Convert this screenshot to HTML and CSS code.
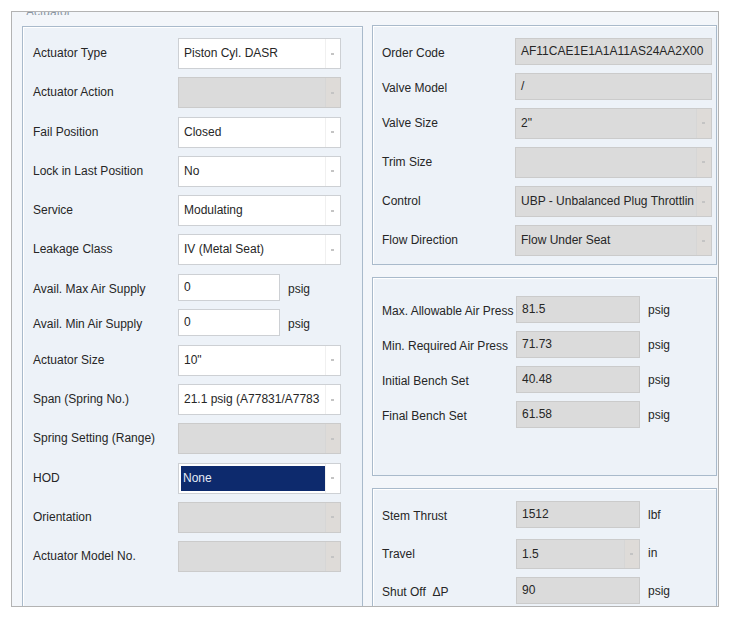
FILE: index.html
```html
<!DOCTYPE html>
<html lang="en">
<head>
    <meta charset="UTF-8">
    <title>Actuator</title>
    <link rel="stylesheet" href="styles.css">
</head>
<body>
    <div class="frame">
        <div class="legend">Actuator</div>
        <div class="columns">
            <div class="group left">
                <div class="row sel"><span class="lbl">Actuator Type</span><div class="fld drop">Piston Cyl. DASR</div></div>
                <div class="row sel"><span class="lbl">Actuator Action</span><div class="fld drop off"></div></div>
                <div class="row sel"><span class="lbl">Fail Position</span><div class="fld drop">Closed</div></div>
                <div class="row sel"><span class="lbl">Lock in Last Position</span><div class="fld drop">No</div></div>
                <div class="row sel"><span class="lbl">Service</span><div class="fld drop">Modulating</div></div>
                <div class="row sel"><span class="lbl">Leakage Class</span><div class="fld drop">IV (Metal Seat)</div></div>
                <div class="row txt"><span class="lbl">Avail. Max Air Supply</span><div class="fld short">0</div><span class="unit">psig</span></div>
                <div class="row txt"><span class="lbl">Avail. Min Air Supply</span><div class="fld short">0</div><span class="unit">psig</span></div>
                <div class="row sel"><span class="lbl">Actuator Size</span><div class="fld drop">10"</div></div>
                <div class="row sel"><span class="lbl">Span (Spring No.)</span><div class="fld drop">21.1 psig (A77831/A7783</div></div>
                <div class="row sel"><span class="lbl">Spring Setting (Range)</span><div class="fld drop off"></div></div>
                <div class="row sel"><span class="lbl">HOD</span><div class="fld drop"><span class="pick">None</span></div></div>
                <div class="row sel"><span class="lbl">Orientation</span><div class="fld drop off"></div></div>
                <div class="row sel"><span class="lbl">Actuator Model No.</span><div class="fld drop off"></div></div>
            </div>

            <div class="right">
                <div class="group box1">
                    <div class="row code"><span class="lbl">Order Code</span><div class="fld off">AF11CAE1E1A1A11AS24AA2X00</div></div>
                    <div class="row code2"><span class="lbl">Valve Model</span><div class="fld off">/</div></div>
                    <div class="row sel"><span class="lbl">Valve Size</span><div class="fld drop off">2"</div></div>
                    <div class="row sel"><span class="lbl">Trim Size</span><div class="fld drop off"></div></div>
                    <div class="row sel"><span class="lbl">Control</span><div class="fld drop off">UBP - Unbalanced Plug Throttlin</div></div>
                    <div class="row sel"><span class="lbl">Flow Direction</span><div class="fld drop off">Flow Under Seat</div></div>
                </div>
                <div class="group box2">
                    <div class="row press"><span class="lbl">Max. Allowable Air Press</span><div class="fld off">81.5</div><span class="unit">psig</span></div>
                    <div class="row press"><span class="lbl">Min. Required Air Press</span><div class="fld off">71.73</div><span class="unit">psig</span></div>
                    <div class="row press"><span class="lbl">Initial Bench Set</span><div class="fld off">40.48</div><span class="unit">psig</span></div>
                    <div class="row press"><span class="lbl">Final Bench Set</span><div class="fld off">61.58</div><span class="unit">psig</span></div>
                </div>
                <div class="group box3">
                    <div class="row force"><span class="lbl">Stem Thrust</span><div class="fld off">1512</div><span class="unit">lbf</span></div>
                    <div class="row force"><span class="lbl">Travel</span><div class="fld off drop tall">1.5</div><span class="unit">in</span></div>
                    <div class="row force"><span class="lbl">Shut Off &nbsp;ΔP</span><div class="fld off">90</div><span class="unit">psig</span></div>
                </div>
            </div>
        </div>
    </div>
</body>
</html>
```

FILE: styles.css
```css
body {
    margin: 0;
    background: #fff;
    font-family: "Liberation Sans", Arial, sans-serif;
    font-size: 12px;
    color: #262626;
}

/* Marco exterior */
.frame {
    margin: 11px 0 0 11px;
    width: 706px;
    height: 594px;
    border: 1px solid #b3b3b3;
    background: #f3f6fa;
    overflow: hidden;
}
.legend {
    height: 3px;
    line-height: 0;
    padding-left: 14px;
    color: #8a96a4;
    font-size: 12px;
    overflow: hidden;
}
.columns {
    display: flex;
    gap: 9px;
    padding-left: 10px;
    margin-top: 11px;
}

.group {
    background: #edf2f8;
    border: 1px solid #a9bacb;
    box-shadow: inset 1px 1px 0 #fff;
    box-sizing: border-box;
}
.left {
    width: 341px;
    height: 581px;
    padding: 11px 0 0 10px;
}
.right {
    width: 345px;
    display: flex;
    flex-direction: column;
    gap: 12px;
    margin-top: -1px;
}
.box1 { height: 240px; padding: 12px 0 0 9px; }
.box2 { height: 199px; padding: 18px 0 0 9px; }
.box3 { height: 140px; padding: 12px 0 0 9px; }

/* Filas */
.row {
    display: flex;
    align-items: flex-start;
}
.row.sel { height: 39.3px; }
.row.txt { height: 35.5px; }
.row.code { height: 34.5px; }
.row.code2 { height: 35px; }
.row.press { height: 35px; }
.row.force { height: 38px; }

.lbl {
    width: 145px;
    line-height: 31px;
    white-space: nowrap;
}
.box1 .lbl { width: 133px; }
.box2 .lbl, .box3 .lbl { width: 134px; }

.fld {
    position: relative;
    box-sizing: border-box;
    width: 163px;
    height: 31px;
    line-height: 29px;
    padding-left: 5px;
    background: #fff;
    border: 1px solid #cdd0d4;
    white-space: nowrap;
    overflow: hidden;
}
.txt .fld { height: 27px; line-height: 25px; }
.fld.short { width: 102px; }
.unit {
    margin-left: 8px;
    line-height: 27px;
}
.txt .unit { line-height: 30px; }

.box1 .fld { width: 197px; }
.code .fld, .code2 .fld { height: 27px; line-height: 25px; }
.box2 .fld, .box3 .fld { width: 124px; height: 27px; line-height: 25px; }
.box3 .fld.tall { height: 30px; line-height: 28px; }
.box2 .unit, .box3 .unit { margin-left: 8px; line-height: 28px; }

.fld.off {
    background: #dbdbdb;
    border-color: #cbcbcb;
}

/* Flecha del desplegable */
.fld.drop::after {
    content: "";
    position: absolute;
    right: 0;
    top: 0;
    bottom: 0;
    width: 14px;
    background: #fff;
    border-left: 1px solid #f0f0f0;
}
.fld.drop::before {
    content: "";
    position: absolute;
    right: 6px;
    top: 50%;
    width: 3px;
    height: 2px;
    margin-top: -1px;
    background: #c4c4c4;
    z-index: 1;
}
.fld.off.drop::after {
    background: #dedbd8;
    border-left-color: #d6d6d6;
}

.pick {
    display: block;
    margin: 2px 15px 2px -3px;
    height: 25px;
    line-height: 25px;
    padding-left: 2px;
    background: #0d2a6d;
    color: #e4eaf6;
}
```
